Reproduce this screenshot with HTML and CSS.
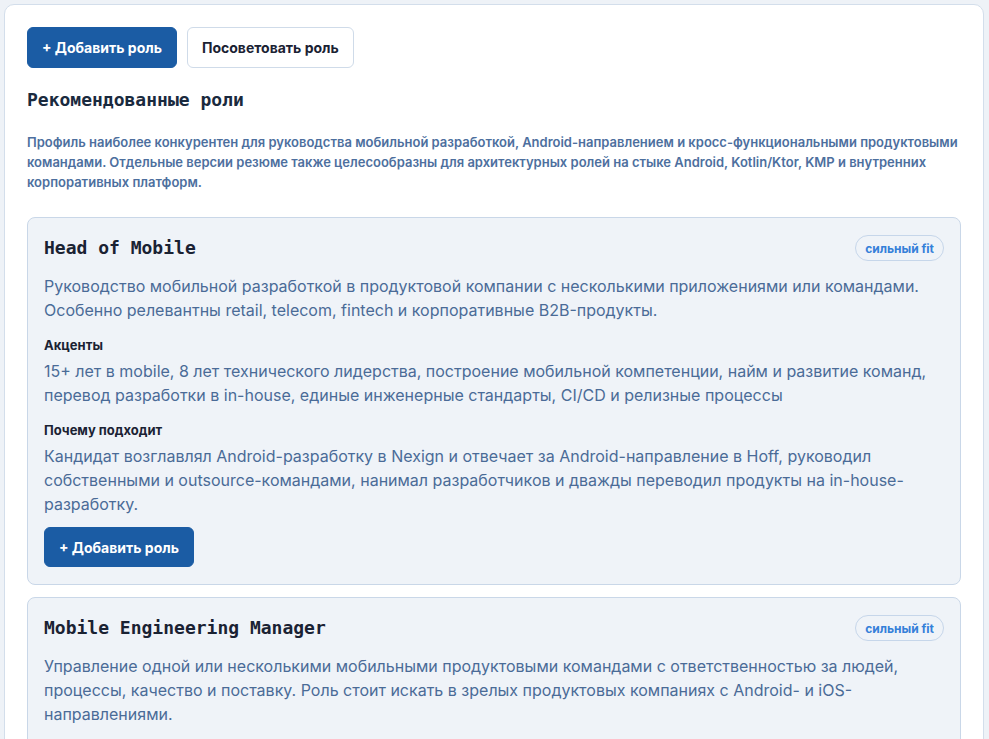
FILE: index.html
```html
<!DOCTYPE html>
<html lang="ru">
<head>
    <meta charset="UTF-8">
    <meta name="viewport" content="width=device-width, initial-scale=1.0">
    <title>Рекомендованные роли</title>
    <link rel="stylesheet" href="styles.css">
</head>
<body>
    <div class="panel">
        <div class="actions">
            <button class="btn btn-primary">+ Добавить роль</button>
            <button class="btn btn-outline">Посоветовать роль</button>
        </div>

        <h2 class="section-title">Рекомендованные роли</h2>
        <p class="summary">
            Профиль наиболее конкурентен для руководства мобильной разработкой, Android-направлением и кросс-функциональными продуктовыми командами. Отдельные версии резюме также целесообразны для архитектурных ролей на стыке Android, Kotlin/Ktor, KMP и внутренних корпоративных платформ.
        </p>

        <div class="role-card">
            <div class="role-head">
                <h3 class="role-title">Head of Mobile</h3>
                <span class="badge">сильный fit</span>
            </div>
            <p class="role-text">Руководство мобильной разработкой в продуктовой компании с несколькими приложениями или командами. Особенно релевантны retail, telecom, fintech и корпоративные B2B-продукты.</p>

            <div class="role-label">Акценты</div>
            <p class="role-text tight">15+ лет в mobile, 8 лет технического лидерства, построение мобильной компетенции, найм и развитие команд, перевод разработки в in-house, единые инженерные стандарты, CI/CD и релизные процессы</p>

            <div class="role-label">Почему подходит</div>
            <p class="role-text tight">Кандидат возглавлял Android-разработку в Nexign и отвечает за Android-направление в Hoff, руководил собственными и outsource-командами, нанимал разработчиков и дважды переводил продукты на in-house-разработку.</p>

            <button class="btn btn-primary btn-card">+ Добавить роль</button>
        </div>

        <div class="role-card">
            <div class="role-head">
                <h3 class="role-title">Mobile Engineering Manager</h3>
                <span class="badge">сильный fit</span>
            </div>
            <p class="role-text">Управление одной или несколькими мобильными продуктовыми командами с ответственностью за людей, процессы, качество и поставку. Роль стоит искать в зрелых продуктовых компаниях с Android- и iOS-направлениями.</p>

            <div class="role-label">Акценты</div>
            <p class="role-text tight">People management, delivery, качество и релизные процессы, взаимодействие с продуктом и дизайном, развитие инженерной культуры.</p>
        </div>
    </div>
</body>
</html>
```

FILE: styles.css
```css
body {
    background: #eef2f7;
    margin: 0;
    padding: 4px 5px 0 4px;
    font-family: 'Inter', 'Noto Sans', Arial, sans-serif;
    color: #1a2233;
}
.panel {
    background: #fff;
    border: 1px solid #d3deeb;
    border-radius: 10px;
    padding: 22px 22px 24px 22px;
}
.actions {
    display: flex;
    gap: 10px;
}
.btn {
    font-family: 'Inter', Arial, sans-serif;
    font-size: 14px;
    font-weight: 700;
    height: 41px;
    padding: 0 14px;
    border-radius: 6px;
    cursor: pointer;
}
.btn-primary {
    background: #1b5ca4;
    color: #fff;
    border: 1px solid #1b5ca4;
}
.btn-outline {
    background: #fff;
    color: #1a2233;
    border: 1px solid #cfdbe9;
}
.section-title {
    font-family: 'DejaVu Sans Mono', monospace;
    font-size: 18px;
    line-height: 24px;
    font-weight: 700;
    color: #1a2a3e;
    margin: 20px 0 0 0;
}
.summary {
    font-size: 13px;
    line-height: 20px;
    font-weight: 600;
    color: #4d6f9e;
    margin: 20px 0 25px 0;
}
.role-card {
    background: #eff3f8;
    border: 1px solid #c9d7e8;
    border-radius: 8px;
    padding: 17px 16px 17px 16px;
    margin-bottom: 12px;
}
.role-head {
    display: flex;
    justify-content: space-between;
    align-items: center;
    height: 26px;
}
.role-title {
    font-family: 'DejaVu Sans Mono', monospace;
    font-size: 18px;
    line-height: 26px;
    font-weight: 700;
    color: #1a2233;
    margin: 0;
}
.badge {
    font-size: 12px;
    font-weight: 700;
    color: #3580d9;
    border: 1px solid #c6d6ea;
    border-radius: 14px;
    padding: 0 9px;
    height: 26px;
    line-height: 26px;
    box-sizing: border-box;
}
.role-text {
    font-size: 16px;
    line-height: 24px;
    color: #4a6b97;
    margin: 13px 0 0 0;
}
.role-text.tight {
    margin-top: 4px;
}
.role-label {
    font-size: 13px;
    line-height: 20px;
    font-weight: 700;
    color: #1a2233;
    margin-top: 13px;
}
.btn-card {
    margin-top: 11px;
    height: 40px;
}
```
